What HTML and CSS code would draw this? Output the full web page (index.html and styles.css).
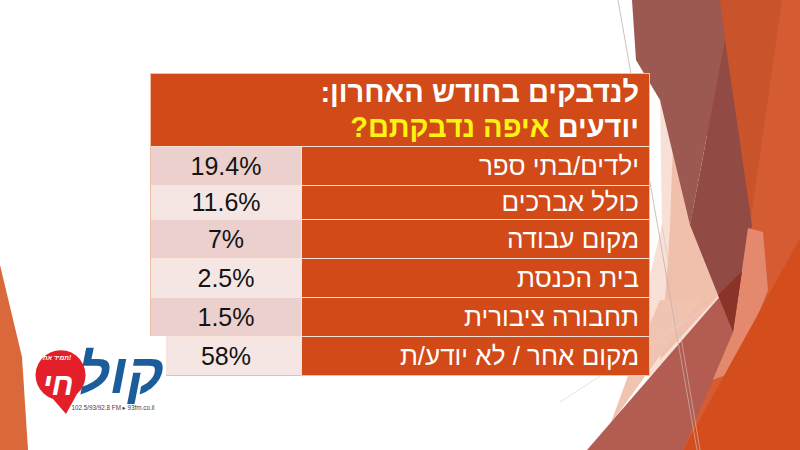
FILE: index.html
```html
<!DOCTYPE html>
<html lang="he">
<head>
<meta charset="utf-8">
<title>לנדבקים בחודש האחרון</title>
<link rel="stylesheet" href="styles.css">
</head>
<body>
<div class="slide">
  <svg class="bg" viewBox="0 0 800 450" width="800" height="450" aria-hidden="true">
    <polygon points="712,0 800,0 800,230 745,230" fill="#c9532b"/>
    <polygon points="0,265 22,357 28,450 0,450" fill="#d9683b"/>
    <polygon points="660,100 740,300 650,376 650,275 662,225" fill="#f8e0d6"/>
    <polygon points="673,140 718,296 660,360 668,260 670,225" fill="#f1c0ad"/>
    <polygon points="610,425 628,376 660,300 700,300" fill="#f1c3b1"/>
    <polygon points="770,0 800,0 800,450 683,450 750,225" fill="#d55c32"/>
    <polygon points="700,0 782,0 750,225 700,120" fill="#c9532b"/>
    <polygon points="632,0 720,0 725,40 690,225 660,100 636,60" fill="#9c5952"/>
    <polygon points="725,40 752,225 733,332 718,295 690,225" fill="#924b44"/>
    <polygon points="748,228 763,232 768,290 735,372 712,380 733,332" fill="#e4896d"/>
    <polygon points="587,450 742,271 733,332 683,450" fill="#b25c52"/>
    <polygon points="718,295 742,271 733,332" fill="#8a3329"/>
    <polygon points="683,450 800,238 800,450" fill="#d44d1c"/>
    <line x1="618" y1="0" x2="697" y2="450" stroke="#c4b0aa" stroke-width="0.8"/>
    <line x1="662" y1="225" x2="700" y2="450" stroke="#d9c2ba" stroke-width="0.6"/>
    <line x1="560" y1="402" x2="715" y2="302" stroke="#e6d2cb" stroke-width="0.7"/>
  </svg>

  <div class="content">
    <div class="table">
      <div class="head">
        <div class="line">לנדבקים בחודש האחרון:</div>
        <div class="line">יודעים <span class="hl">איפה נדבקתם?</span></div>
      </div>
      <div class="label">ילדים/בתי ספר</div><div class="val">19.4%</div>
      <div class="label">כולל אברכים</div><div class="val alt">11.6%</div>
      <div class="label">מקום עבודה</div><div class="val">7%</div>
      <div class="label">בית הכנסת</div><div class="val alt">2.5%</div>
      <div class="label">תחבורה ציבורית</div><div class="val">1.5%</div>
      <div class="label">מקום אחר / לא יודע/ת</div><div class="val alt">58%</div>
    </div>
  </div>

  <div class="logo">
    <svg viewBox="30 336 136 114" width="136" height="114">
      <path d="M 53 399 A 25 25 0 1 1 77 394 L 66 414 Z" fill="#e3202a"/>
      <text x="56" y="360" class="lg-tag">תמיד אתי!</text>
      <text x="58" y="395" class="lg-chai">חי</text>
      <text x="121" y="393" class="lg-kol">קול</text>
      <text x="113" y="410" class="lg-freq">102.5/93/92.8 FM ▸ 93fm.co.il</text>
    </svg>
  </div>
</div>
</body>
</html>
```

FILE: styles.css
```css
body {
  margin: 0;
}

.slide {
  position: relative;
  width: 800px;
  height: 450px;
  overflow: hidden;
  background: #ffffff;
  font-family: "Liberation Sans", "DejaVu Sans", sans-serif;
}

.bg {
  position: absolute;
  left: 0;
  top: 0;
}

.content {
  position: relative;
  padding-top: 73px;
  padding-left: 150px;
}

.table {
  width: 500px;
  box-sizing: border-box;
  border: 1px solid #f3bca5;
  background: #fbe3d8;
  display: grid;
  grid-template-columns: 347px 150px;
  grid-template-rows: 72px 38px 33px 38px 38px 38px 38px;
  column-gap: 1px;
  row-gap: 1px;
  direction: rtl;
}

.head {
  grid-column: 1 / -1;
  background: #d14a18;
  color: #ffffff;
  font-weight: bold;
  font-size: 29px;
  line-height: 35px;
  padding: 1px 10px 0 0;
  text-align: right;
}

.hl {
  color: #fbf312;
}

.label {
  background: #d14a18;
  color: #ffffff;
  font-size: 26px;
  padding-right: 10px;
  display: flex;
  align-items: center;
}

.val {
  background: #ebd0ce;
  color: #141414;
  font-size: 25px;
  display: flex;
  align-items: center;
  justify-content: center;
  direction: ltr;
}

.val.alt {
  background: #f5e6e4;
}

.logo {
  position: absolute;
  left: 30px;
  top: 336px;
  width: 136px;
  height: 114px;
  background: #ffffff;
}

.logo svg {
  display: block;
}

.lg-tag {
  fill: #ffffff;
  font-size: 6.5px;
  font-weight: bold;
  font-style: italic;
  text-anchor: middle;
}

.lg-chai {
  fill: #ffffff;
  font-size: 31px;
  font-weight: 900;
  font-style: italic;
  text-anchor: middle;
}

.lg-kol {
  fill: #1b5c9a;
  font-size: 56px;
  font-weight: 900;
  font-style: italic;
  text-anchor: middle;
}

.lg-freq {
  fill: #444444;
  font-size: 6.3px;
  text-anchor: middle;
}
```
